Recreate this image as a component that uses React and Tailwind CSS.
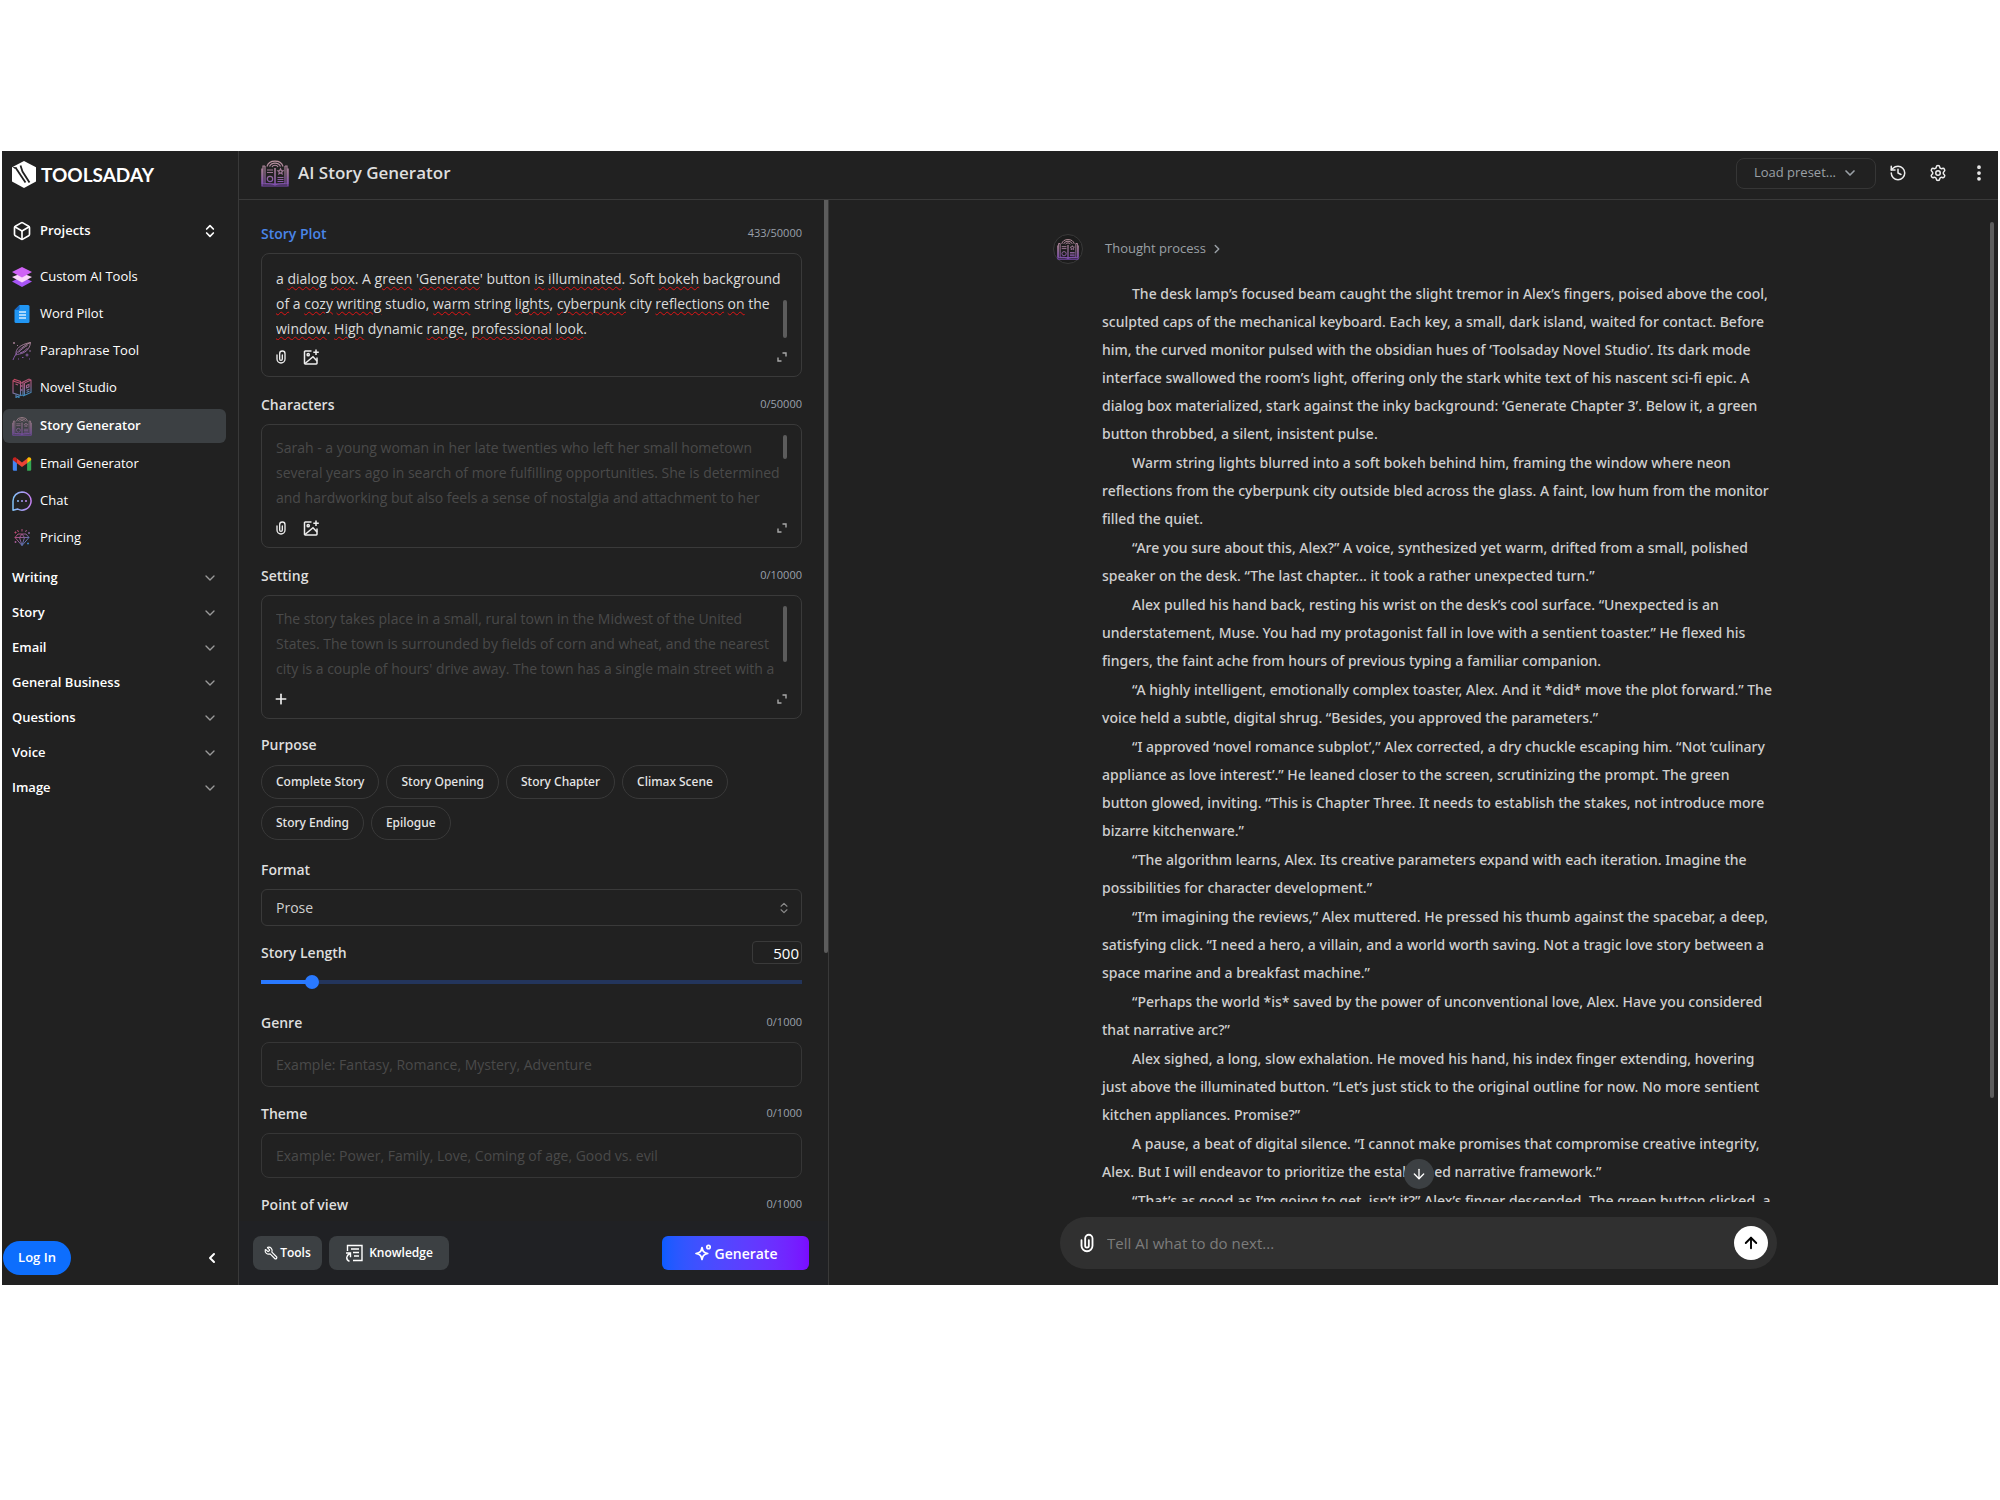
import React from "react";
import {
  ArrowDown,
  ArrowUp,
  Box,
  ChevronDown,
  ChevronLeft,
  ChevronRight,
  ChevronsUpDown,
  EllipsisVertical,
  History,
  Plus,
  Settings,
  Wrench,
} from "lucide-react";

const OPEN = "font-['Open_Sans',sans-serif]";

/* ---------- drawings ---------- */

function Logo() {
  return (
    <svg viewBox="0 0 24 27" className="h-[27px] w-6" aria-hidden="true">
      <path d="M12 0 24 6.3V20.5L12 27 0 20.5V6.3Z" fill="#fff" />
      <path d="M3.5 6.500 13.500 21.500" stroke="#212121" strokeWidth="1.8" fill="none" />
      <path d="M8.500 4.500 10.500 10.500 17.500 21.500" stroke="#212121" strokeWidth="1.8" fill="none" />
      <path d="M0 5.500 4.500 6.500 3 8z" fill="#212121" />
    </svg>
  );
}

function StoryIcon({ id, className }) {
  return (
    <svg viewBox="0 0 28 28" className={className} fill="none" stroke={`url(#${id})`} strokeWidth="1.2" aria-hidden="true">
      <defs>
        <linearGradient id={id} x1="0" y1="0" x2="0" y2="28" gradientUnits="userSpaceOnUse">
          <stop offset="0" stopColor="#c39aa2" />
          <stop offset="0.5" stopColor="#9c7496" />
          <stop offset="1" stopColor="#7d49b8" />
        </linearGradient>
      </defs>
      <path d="M4 7H2v17.500H.8V9.500M24 7h2v17.500h1.200V9.500M1 27h26v-2H1z" />
      <path d="M4 7v17.500c4 0 7 .2 10 1.500 3-1.300 6-1.500 10-1.500V7" />
      <path d="M14 9v17" strokeWidth="1.600" />
      <path d="M6 7.500a8.200 7 0 0 1 16 0M8.500 7.500a5.800 5 0 0 1 11 0M11 8a3.300 3 0 0 1 6 0" />
      <path d="M6 11h6M6 13.500h6M16.500 18.500h6M16.500 20.500h6M16.500 22.500h6" />
      <circle cx="9" cy="20" r="2.700" />
      <path d="m19.500 9.800.8 1.700 1.800.2-1.300 1.300.3 1.800-1.600-.9-1.600.9.3-1.800-1.300-1.300 1.800-.2z" />
    </svg>
  );
}

function LayersIcon() {
  return (
    <svg viewBox="0 0 20 20" className="size-5" aria-hidden="true">
      <path d="M10 9.500 20 14.500 10 20 0 14.500Z" fill="#a855f7" />
      <path d="M10 6 20 10 10 15.500 0 10Z" fill="#fbd5fb" />
      <path d="M10 0 20 5 10 10.500 0 5Z" fill="#cf62f5" />
    </svg>
  );
}

function DocIcon() {
  return (
    <svg viewBox="0 0 20 20" className="size-5" aria-hidden="true">
      <path d="M7.500 1H16a1.500 1.500 0 0 1 1.500 1.500v15A1.500 1.500 0 0 1 16 19H4a1.500 1.500 0 0 1-1.500-1.500V6z" fill="#2196f3" />
      <path d="M7.500 1v3.500A1.500 1.500 0 0 1 6 6H2.500z" fill="#1565c0" />
      <path d="M7 8h7M7 11h7M7 14h7" stroke="#d6ecff" strokeWidth="1.400" />
    </svg>
  );
}

function QuillIcon() {
  return (
    <svg viewBox="0 0 20 20" className="size-5" fill="none" stroke="url(#quill)" strokeWidth="1" aria-hidden="true">
      <defs>
        <linearGradient id="quill" x1="0" y1="0" x2="0" y2="20" gradientUnits="userSpaceOnUse">
          <stop offset="0" stopColor="#a8848f" />
          <stop offset="1" stopColor="#7d4fae" />
        </linearGradient>
      </defs>
      <path d="M1 19C3.500 12 9 6 18.500 1.500 18 6 16 9.500 12 11.500c-3 1.700-6 1.500-8.500 2.500" />
      <path d="M4 13C3.500 8 8 3.500 18.500 1.500M6.500 11.500c3-3.500 6-5.500 9-7M8 12c3-1 5-2 7.500-5" />
      <path d="M15 12.500v3M13.500 14h3M18 9v2M2 1v2M1 2h2M5 4.500h1M10 16.500h1.500M17 18h1M6 18h1" />
    </svg>
  );
}

function NovelIcon() {
  return (
    <svg viewBox="0 0 20 20" className="size-5" fill="none" stroke="url(#novel)" strokeWidth="1.1" aria-hidden="true">
      <defs>
        <linearGradient id="novel" x1="3" y1="0" x2="9" y2="20" gradientUnits="userSpaceOnUse">
          <stop offset="0" stopColor="#c4435a" />
          <stop offset="0.55" stopColor="#a2628f" />
          <stop offset="1" stopColor="#2b93c4" />
        </linearGradient>
      </defs>
      <path d="M1 3v12l7.500 2.500V5.500zM1 3l1.500-1.500 6 2v2M8.500 5.500 11 4v13l-2.500.5M11 4l6-3 2 1v12.500L11 18M12.500 5v12M19 2l-6.500 3" />
      <path d="M14.500 7.500 17 6.300v2.500l-2.500 1.200zM14.500 12.500l3-1.500M14.500 14.500l3-1.500M4 16.500v3l1.500-1 1.500 1v-2" />
      <path d="M9.800 7v2M9.800 11v2M3.500 6l2.500 1" />
    </svg>
  );
}

function MailIcon() {
  return (
    <svg viewBox="0 0 20 20" className="size-5" aria-hidden="true">
      <path d="M.8 5.500V15.500A1.200 1.200 0 0 0 2 16.700h2.900V8.600z" fill="#4285f4" />
      <path d="M19.200 5.500V15.500A1.200 1.200 0 0 1 18 16.700h-2.900V8.600z" fill="#34a853" />
      <path d="M15.100 4.600v4.600l4.100-3.100V5.300c0-1.700-1.900-2.700-3.300-1.600z" fill="#fbbc04" />
      <path d="M4.900 9.200V4.600L10 8.400l5.100-3.800v4.600L10 13z" fill="#ea4335" />
      <path d="M.8 5.300v.8l4.100 3.100V4.600l-.8-.9C2.700 2.600.8 3.600.8 5.300z" fill="#c5221f" />
    </svg>
  );
}

function ChatIcon() {
  return (
    <svg viewBox="0 0 20 20" className="size-5" fill="none" aria-hidden="true">
      <defs>
        <linearGradient id="chat" x1="0" y1="0" x2="20" y2="0" gradientUnits="userSpaceOnUse">
          <stop offset="0" stopColor="#7cc4f5" />
          <stop offset="1" stopColor="#c77df0" />
        </linearGradient>
      </defs>
      <path d="M10 .9a9.100 9.100 0 1 1-4.200 17.200L1 19.200V10A9.100 9.100 0 0 1 10 .9z" stroke="url(#chat)" strokeWidth="1.500" strokeLinejoin="round" />
      <circle cx="6" cy="10" r="1" fill="#8ab8f5" />
      <circle cx="10" cy="10" r="1" fill="#a69cf3" />
      <circle cx="14" cy="10" r="1" fill="#c288f1" />
    </svg>
  );
}

function GemIcon() {
  return (
    <svg viewBox="0 0 20 20" className="size-5" fill="none" stroke="url(#gem)" strokeWidth="1" aria-hidden="true">
      <defs>
        <linearGradient id="gem" x1="2" y1="2" x2="17" y2="17" gradientUnits="userSpaceOnUse">
          <stop offset="0" stopColor="#d04468" />
          <stop offset="0.5" stopColor="#965a92" />
          <stop offset="1" stopColor="#2e86c8" />
        </linearGradient>
      </defs>
      <path d="M6 6h8l3 3.500-7 8-7-8zM3 9.500h14M7.500 9.500 10 17.500l2.500-8L10 6z" />
      <path d="M10 1v2.500M5.500 2l1 2M14.500 2l-1 2M2.500 4.500h2M3.500 3.500v2M16 5h2M17 4v2M2.500 14h2M3.500 13v2M15 15.500h2M16 14.500v2" />
    </svg>
  );
}

function Clip({ className }) {
  return (
    <svg viewBox="0 0 24 24" className={className} fill="currentColor" aria-hidden="true">
      <path
        fillRule="evenodd"
        d="M9 7a5 5 0 0 1 10 0v8a7 7 0 1 1-14 0V9a1 1 0 0 1 2 0v6a5 5 0 0 0 10 0V7a3 3 0 1 0-6 0v8a1 1 0 1 0 2 0V9a1 1 0 1 1 2 0v6a3 3 0 1 1-6 0z"
      />
    </svg>
  );
}

function ImageAdd() {
  return (
    <svg viewBox="0 0 16 16" className="size-4" fill="none" stroke="currentColor" strokeWidth="1.500" aria-hidden="true">
      <path d="M8.500 2H2.200A.7.700 0 0 0 1.500 2.700v11.600a.7.700 0 0 0 .7.700h11.100a.7.700 0 0 0 .7-.7V8.500" />
      <path d="M13 .5v5.500M10.300 3.200h5.500M2 14.500l8-6.800 4 4.200" />
      <circle cx="5.200" cy="5.700" r="1.100" />
    </svg>
  );
}

function Expand() {
  return (
    <svg viewBox="0 0 10 10" className="size-2.5" fill="none" stroke="currentColor" strokeWidth="1.400" aria-hidden="true">
      <path d="M5.500 1H9v3.500M1 5.500V9h3.500" />
    </svg>
  );
}

function KnowledgeIcon() {
  return (
    <svg viewBox="0 0 18 18" className="size-[18px]" fill="none" stroke="currentColor" strokeWidth="1.400" aria-hidden="true">
      <path d="M2.500 7V1.500h14.500v15H8M6 5h8M8 8.500h6M9 12h5" />
      <path d="M1 9h4.500v4.200M5 9.500c-4 2-4.500 6-.5 7.800" />
    </svg>
  );
}

function Spark() {
  return (
    <svg viewBox="0 0 18 18" className="size-[18px]" fill="none" stroke="currentColor" strokeWidth="1.700" strokeLinejoin="round" aria-hidden="true">
      <path d="M8 3.500c.8 4 1.700 5 5.700 6-4 .9-4.900 1.900-5.700 6-.8-4.100-1.700-5.100-6-6 4.300-1 5.200-2 6-6z" />
      <circle cx="14.500" cy="3" r="1.700" />
    </svg>
  );
}

/* ---------- data ---------- */

const NAV = [
  { label: "Custom AI Tools", icon: <LayersIcon /> },
  { label: "Word Pilot", icon: <DocIcon /> },
  { label: "Paraphrase Tool", icon: <QuillIcon /> },
  { label: "Novel Studio", icon: <NovelIcon /> },
  { label: "Story Generator", icon: <StoryIcon id="navStory" className="size-5 opacity-80" />, active: true },
  { label: "Email Generator", icon: <MailIcon /> },
  { label: "Chat", icon: <ChatIcon /> },
  { label: "Pricing", icon: <GemIcon /> },
];

const GROUPS = ["Writing", "Story", "Email", "General Business", "Questions", "Voice", "Image"];

const PURPOSES = ["Complete Story", "Story Opening", "Story Chapter", "Climax Scene", "Story Ending", "Epilogue"];

const PLOT =
  "a dialog box. A green 'Generate' button is illuminated. Soft bokeh background of a cozy writing studio, warm string lights, cyberpunk city reflections on the window. High dynamic range, professional look.";

const MISSPELT = new Set([
  "dialog", "box", "green", "Generate", "is", "illuminated", "bokeh", "of", "cozy", "writing", "warm",
  "lights", "cyberpunk", "reflections", "on", "window", "High", "range", "professional", "look",
]);

const STORY = [
  [
    "The desk lamp’s focused beam caught the slight tremor in Alex’s fingers, poised above the cool,",
    "sculpted caps of the mechanical keyboard. Each key, a small, dark island, waited for contact. Before",
    "him, the curved monitor pulsed with the obsidian hues of ‘Toolsaday Novel Studio’. Its dark mode",
    "interface swallowed the room’s light, offering only the stark white text of his nascent sci-fi epic. A",
    "dialog box materialized, stark against the inky background: ‘Generate Chapter 3’. Below it, a green",
    "button throbbed, a silent, insistent pulse.",
  ],
  [
    "Warm string lights blurred into a soft bokeh behind him, framing the window where neon",
    "reflections from the cyberpunk city outside bled across the glass. A faint, low hum from the monitor",
    "filled the quiet.",
  ],
  [
    "“Are you sure about this, Alex?” A voice, synthesized yet warm, drifted from a small, polished",
    "speaker on the desk. “The last chapter… it took a rather unexpected turn.”",
  ],
  [
    "Alex pulled his hand back, resting his wrist on the desk’s cool surface. “Unexpected is an",
    "understatement, Muse. You had my protagonist fall in love with a sentient toaster.” He flexed his",
    "fingers, the faint ache from hours of previous typing a familiar companion.",
  ],
  [
    "“A highly intelligent, emotionally complex toaster, Alex. And it *did* move the plot forward.” The",
    "voice held a subtle, digital shrug. “Besides, you approved the parameters.”",
  ],
  [
    "“I approved ‘novel romance subplot’,” Alex corrected, a dry chuckle escaping him. “Not ‘culinary",
    "appliance as love interest’.” He leaned closer to the screen, scrutinizing the prompt. The green",
    "button glowed, inviting. “This is Chapter Three. It needs to establish the stakes, not introduce more",
    "bizarre kitchenware.”",
  ],
  [
    "“The algorithm learns, Alex. Its creative parameters expand with each iteration. Imagine the",
    "possibilities for character development.”",
  ],
  [
    "“I’m imagining the reviews,” Alex muttered. He pressed his thumb against the spacebar, a deep,",
    "satisfying click. “I need a hero, a villain, and a world worth saving. Not a tragic love story between a",
    "space marine and a breakfast machine.”",
  ],
  [
    "“Perhaps the world *is* saved by the power of unconventional love, Alex. Have you considered",
    "that narrative arc?”",
  ],
  [
    "Alex sighed, a long, slow exhalation. He moved his hand, his index finger extending, hovering",
    "just above the illuminated button. “Let’s just stick to the original outline for now. No more sentient",
    "kitchen appliances. Promise?”",
  ],
  [
    "A pause, a beat of digital silence. “I cannot make promises that compromise creative integrity,",
    "Alex. But I will endeavor to prioritize the established narrative framework.”",
  ],
  ["“That’s as good as I’m going to get, isn’t it?” Alex’s finger descended. The green button clicked, a"],
];

/* ---------- parts ---------- */

function FieldHead({ htmlFor, label, count, accent }) {
  return (
    <div className="mb-2.5 flex h-5 items-center justify-between">
      <label
        htmlFor={htmlFor}
        className={`text-[14px] font-semibold ${accent ? "text-[#4a86e8]" : "text-[#dedede]"}`}
      >
        {label}
      </label>
      {count && <span className="text-[11px] text-[#9aa0ab]">{count}</span>}
    </div>
  );
}

function SpellLayer({ text }) {
  return (
    <div aria-hidden="true" className="h-[76px] overflow-hidden pt-0.5 text-transparent [grid-area:1/1]">
      {text.split(/([A-Za-z]+)/).map((w, i) =>
        MISSPELT.has(w) ? (
          <span key={i} className="underline decoration-[#e01414] decoration-wavy decoration-1 underline-offset-2">
            {w}
          </span>
        ) : (
          w
        )
      )}
    </div>
  );
}

function LongField({ id, label, count, accent, value, placeholder, thumb, media }) {
  return (
    <section>
      <FieldHead htmlFor={id} label={label} count={count} accent={accent} />
      <div className="flex h-[124px] flex-col rounded-lg border border-[#3a3a3a] px-[14px] pt-[10px]">
        <div className="flex text-[14px] leading-[25px]">
          <div className="grid min-w-0 grow">
            {value && <SpellLayer text={value} />}
            <textarea
              id={id}
              spellCheck={false}
              defaultValue={value}
              placeholder={placeholder}
              className={`block h-[76px] w-full resize-none overflow-hidden bg-transparent text-[#dcdcdc] outline-none [grid-area:1/1] placeholder:text-[#4a4a4a] ${
                value ? "pt-0.5" : ""
              }`}
            />
          </div>
          <div className="w-1 shrink-0">
            <div className={`rounded-full bg-[#5c5c5c] ${thumb}`} />
          </div>
        </div>
        <div className="flex h-[34px] items-center gap-[14px] text-[#ededed]">
          {media ? (
            <>
              <button type="button" aria-label="Attach file" className="-ml-[3px]">
                <Clip className="size-4" />
              </button>
              <button type="button" aria-label="Add image">
                <ImageAdd />
              </button>
            </>
          ) : (
            <button type="button" aria-label="Add" className="-ml-[3px]">
              <Plus className="size-4" strokeWidth={2.5} />
            </button>
          )}
          <button type="button" aria-label="Expand" className="ml-auto text-[#a8a8a8]">
            <Expand />
          </button>
        </div>
      </div>
    </section>
  );
}

function ShortField({ id, label, placeholder }) {
  return (
    <section>
      <FieldHead htmlFor={id} label={label} count="0/1000" />
      <input
        id={id}
        placeholder={placeholder}
        className="block h-[45px] w-full rounded-lg border border-[#363636] bg-transparent px-[14px] text-[14px] text-[#d6d6d6] outline-none placeholder:text-[#4a4a4a]"
      />
    </section>
  );
}

function Sidebar() {
  return (
    <aside className="flex w-[237px] shrink-0 flex-col border-r border-[#393939] text-white">
      <a href="#home" className="ml-2.5 mt-2.5 flex items-center gap-[5px]">
        <Logo />
        <span className="font-['Lato',sans-serif] text-[19px] font-bold leading-[27px]">TOOLSADAY</span>
      </a>
      <button type="button" className="ml-2.5 mr-4 mt-[25px] flex h-9 items-center text-[13px] font-semibold">
        <Box className="mr-2 size-5" strokeWidth={2} />
        Projects
        <ChevronsUpDown className="ml-auto mr-1 size-4" strokeWidth={2.5} />
      </button>
      <nav className="ml-px mr-3 mt-[11px] flex flex-col gap-[3px]">
        {NAV.map((n) => (
          <a
            key={n.label}
            href={`#${n.label}`}
            className={`flex h-[34px] items-center gap-2 rounded-md pl-[9px] text-[13px] ${
              n.active ? "my-px bg-[#3c4043] font-semibold" : ""
            }`}
          >
            {n.icon}
            {n.label}
          </a>
        ))}
      </nav>
      <div className="ml-2.5 mr-4 mt-[5px] flex flex-col">
        {GROUPS.map((g) => (
          <button key={g} type="button" className="flex h-[35px] items-center justify-between text-[13px] font-semibold">
            {g}
            <ChevronDown className="mr-1 size-4 text-[#9a9a9a]" strokeWidth={2} />
          </button>
        ))}
      </div>
      <div className="mb-2.5 ml-px mr-[18px] mt-auto flex items-center justify-between">
        <button type="button" className="h-[34px] w-[68px] rounded-full bg-[#0d6efd] text-[13px] font-semibold">
          Log In
        </button>
        <button type="button" aria-label="Collapse sidebar">
          <ChevronLeft className="size-4" strokeWidth={3} />
        </button>
      </div>
    </aside>
  );
}

function Header() {
  return (
    <header className="flex h-[49px] shrink-0 items-center border-b border-[#3a3a3a] pb-1 pl-[22px] pr-[9px]">
      <StoryIcon id="headStory" className="size-7" />
      <h1 className="ml-[9px] text-[17px] font-semibold text-[#dedede]">AI Story Generator</h1>
      <button
        type="button"
        className="ml-auto flex h-[31px] w-[140px] items-center justify-center gap-1.5 rounded-lg border border-[#363636] text-[13px] text-[#9aa0a6]"
      >
        Load preset...
        <ChevronDown className="size-4" strokeWidth={2.5} />
      </button>
      <div className="ml-[13px] flex items-center gap-[22px] text-[#ededed]">
        <button type="button" aria-label="History">
          <History className="size-[18px]" />
        </button>
        <button type="button" aria-label="Settings">
          <Settings className="size-[18px]" />
        </button>
        <button type="button" aria-label="More">
          <EllipsisVertical className="size-5" strokeWidth={2.5} />
        </button>
      </div>
    </header>
  );
}

function FormPanel() {
  return (
    <section className="flex w-[590px] shrink-0 flex-col border-r border-[#393939]">
      <div className="flex min-h-0 grow overflow-hidden">
        <form className="min-w-0 grow pl-[22px] pr-[26px] pt-[23px]">
          <div className="flex flex-col gap-[17px]">
            <LongField id="plot" label="Story Plot" count="433/50000" accent value={PLOT} thumb="mt-[36px] h-[38px]" media />
            <LongField
              id="characters"
              label="Characters"
              count="0/50000"
              placeholder="Sarah - a young woman in her late twenties who left her small hometown several years ago in search of more fulfilling opportunities. She is determined and hardworking but also feels a sense of nostalgia and attachment to her"
              thumb="h-6"
              media
            />
            <LongField
              id="setting"
              label="Setting"
              count="0/10000"
              placeholder="The story takes place in a small, rural town in the Midwest of the United States. The town is surrounded by fields of corn and wheat, and the nearest city is a couple of hours' drive away. The town has a single main street with a"
              thumb="h-[56px]"
            />
          </div>

          <fieldset className="mt-4">
            <legend className="mb-2.5 h-5 text-[14px] font-semibold leading-5 text-[#dedede]">Purpose</legend>
            <div className="flex flex-wrap gap-[7px]">
              {PURPOSES.map((p) => (
                <button
                  key={p}
                  type="button"
                  className="h-[34px] rounded-full border border-[#393939] px-[14px] font-['Noto_Sans',sans-serif] text-[12px] font-medium text-[#e6e6e6]"
                >
                  {p}
                </button>
              ))}
            </div>
          </fieldset>

          <div className="mt-[19px]">
            <FieldHead htmlFor="format" label="Format" />
            <div className="grid items-center">
              <select
                id="format"
                className="h-[37px] w-full appearance-none rounded-md border border-[#3a3a3a] bg-transparent px-[14px] text-[14px] text-[#cfcfcf] outline-none [grid-area:1/1]"
              >
                <option>Prose</option>
              </select>
              <ChevronsUpDown className="pointer-events-none mr-[11px] size-[14px] justify-self-end text-[#8a8a8a] [grid-area:1/1]" />
            </div>
          </div>

          <div className="mt-[15px]">
            <div className="flex h-[23px] items-center justify-between">
              <label htmlFor="length" className="text-[14px] font-semibold text-[#dedede]">
                Story Length
              </label>
              <input
                aria-label="Story length value"
                defaultValue="500"
                className="h-[23px] w-[50px] rounded border border-[#3a3a3a] bg-transparent pr-0.5 text-right text-[15px] text-white outline-none"
              />
            </div>
            <input
              id="length"
              type="range"
              min="0"
              max="1000"
              defaultValue="84"
              className="mt-[11px] block h-[14px] w-full appearance-none bg-[linear-gradient(to_right,#2979ff_9.3%,#23355c_9.3%)] bg-[length:100%_4px] bg-center bg-no-repeat [&::-webkit-slider-thumb]:size-[14px] [&::-webkit-slider-thumb]:appearance-none [&::-webkit-slider-thumb]:rounded-full [&::-webkit-slider-thumb]:bg-[#2979ff]"
            />
          </div>

          <div className="mt-[23px] flex flex-col gap-4">
            <ShortField id="genre" label="Genre" placeholder="Example: Fantasy, Romance, Mystery, Adventure" />
            <ShortField id="theme" label="Theme" placeholder="Example: Power, Family, Love, Coming of age, Good vs. evil" />
            <ShortField id="pov" label="Point of view" placeholder="" />
          </div>
        </form>
        <div className="-ml-1 h-[753px] w-1 shrink-0 rounded-b-full bg-[#5c5c5c]" />
      </div>
      <footer className="flex h-[64px] shrink-0 items-center gap-[7px] bg-[#202124] pl-[14px] pr-[19px] font-semibold text-white">
        <button type="button" className="flex h-[34px] w-[69px] items-center justify-center gap-0.5 rounded-lg bg-[#3c4043] text-[12px]">
          <Wrench className="size-[14px] -scale-x-100" strokeWidth={2} />
          Tools
        </button>
        <button type="button" className="flex h-[34px] w-[120px] items-center justify-center gap-1.5 rounded-lg bg-[#3c4043] text-[12px]">
          <KnowledgeIcon />
          Knowledge
        </button>
        <button
          type="button"
          className="ml-auto flex h-[34px] w-[147px] items-center justify-center gap-[3px] rounded-md bg-linear-to-r from-[#0a5cff] to-[#7a0bff] text-[14px]"
        >
          <Spark />
          Generate
        </button>
      </footer>
    </section>
  );
}

function StoryPanel() {
  return (
    <main className="flex min-w-0 grow flex-col">
      <div className="flex min-h-0 grow overflow-hidden">
        <div className="min-w-0 grow pl-[18px]">
          <article className="mx-auto max-w-[731px] pt-[34px]">
            <div className="flex items-center">
              <span className="flex size-[30px] items-center justify-center rounded-full border border-[#393939] bg-[#1c1c1c]">
                <StoryIcon id="avatarStory" className="size-[22px]" />
              </span>
              <button type="button" className="ml-[22px] flex items-center gap-1 text-[13px] text-[#9aa0a6]">
                Thought process
                <ChevronRight className="size-[14px]" strokeWidth={2.5} />
              </button>
            </div>
            <div className="mt-4 flex flex-col gap-px pl-[49px] font-['Noto_Sans',sans-serif] text-[14px] font-medium leading-7 text-[#cfcfcf]">
              {STORY.map((lines, i) => (
                <p key={i} className="indent-[30px] whitespace-nowrap">
                  {lines.map((l, j) => (
                    <React.Fragment key={j}>
                      {j > 0 && <br />}
                      {l}
                    </React.Fragment>
                  ))}
                </p>
              ))}
            </div>
          </article>
        </div>
        <div className="mr-1 mt-[22px] h-[876px] w-1 shrink-0 rounded-full bg-[#5c5c5c]" />
      </div>
      <div className="relative pb-4 pl-[18px] pr-2 pt-[15px]">
        <button
          type="button"
          aria-label="Scroll to bottom"
          className="absolute -top-[43px] left-1/2 ml-[5px] flex size-[30px] -translate-x-1/2 items-center justify-center rounded-full bg-[#3c4043] text-white"
        >
          <ArrowDown className="size-4" />
        </button>
        <div className="mx-auto flex h-[52px] max-w-[717px] items-center rounded-full bg-[#303030] pl-4 pr-[9px]">
          <button type="button" aria-label="Attach file" className="text-white">
            <Clip className="size-[22px]" />
          </button>
          <input
            aria-label="Message"
            placeholder="Tell AI what to do next..."
            className="ml-[9px] min-w-0 grow bg-transparent text-[15px] text-white outline-none placeholder:text-[#7c7c7c]"
          />
          <button type="button" aria-label="Send" className="flex size-[34px] items-center justify-center rounded-full bg-white text-black">
            <ArrowUp className="size-[18px]" strokeWidth={2.5} />
          </button>
        </div>
      </div>
    </main>
  );
}

export default function App() {
  return (
    <div className={`h-screen bg-white px-0.5 pb-[215px] pt-[151px] ${OPEN}`}>
      <div className="flex h-full overflow-hidden bg-[#212121]">
        <Sidebar />
        <div className="flex min-w-0 grow flex-col">
          <Header />
          <div className="flex min-h-0 grow">
            <FormPanel />
            <StoryPanel />
          </div>
        </div>
      </div>
    </div>
  );
}
